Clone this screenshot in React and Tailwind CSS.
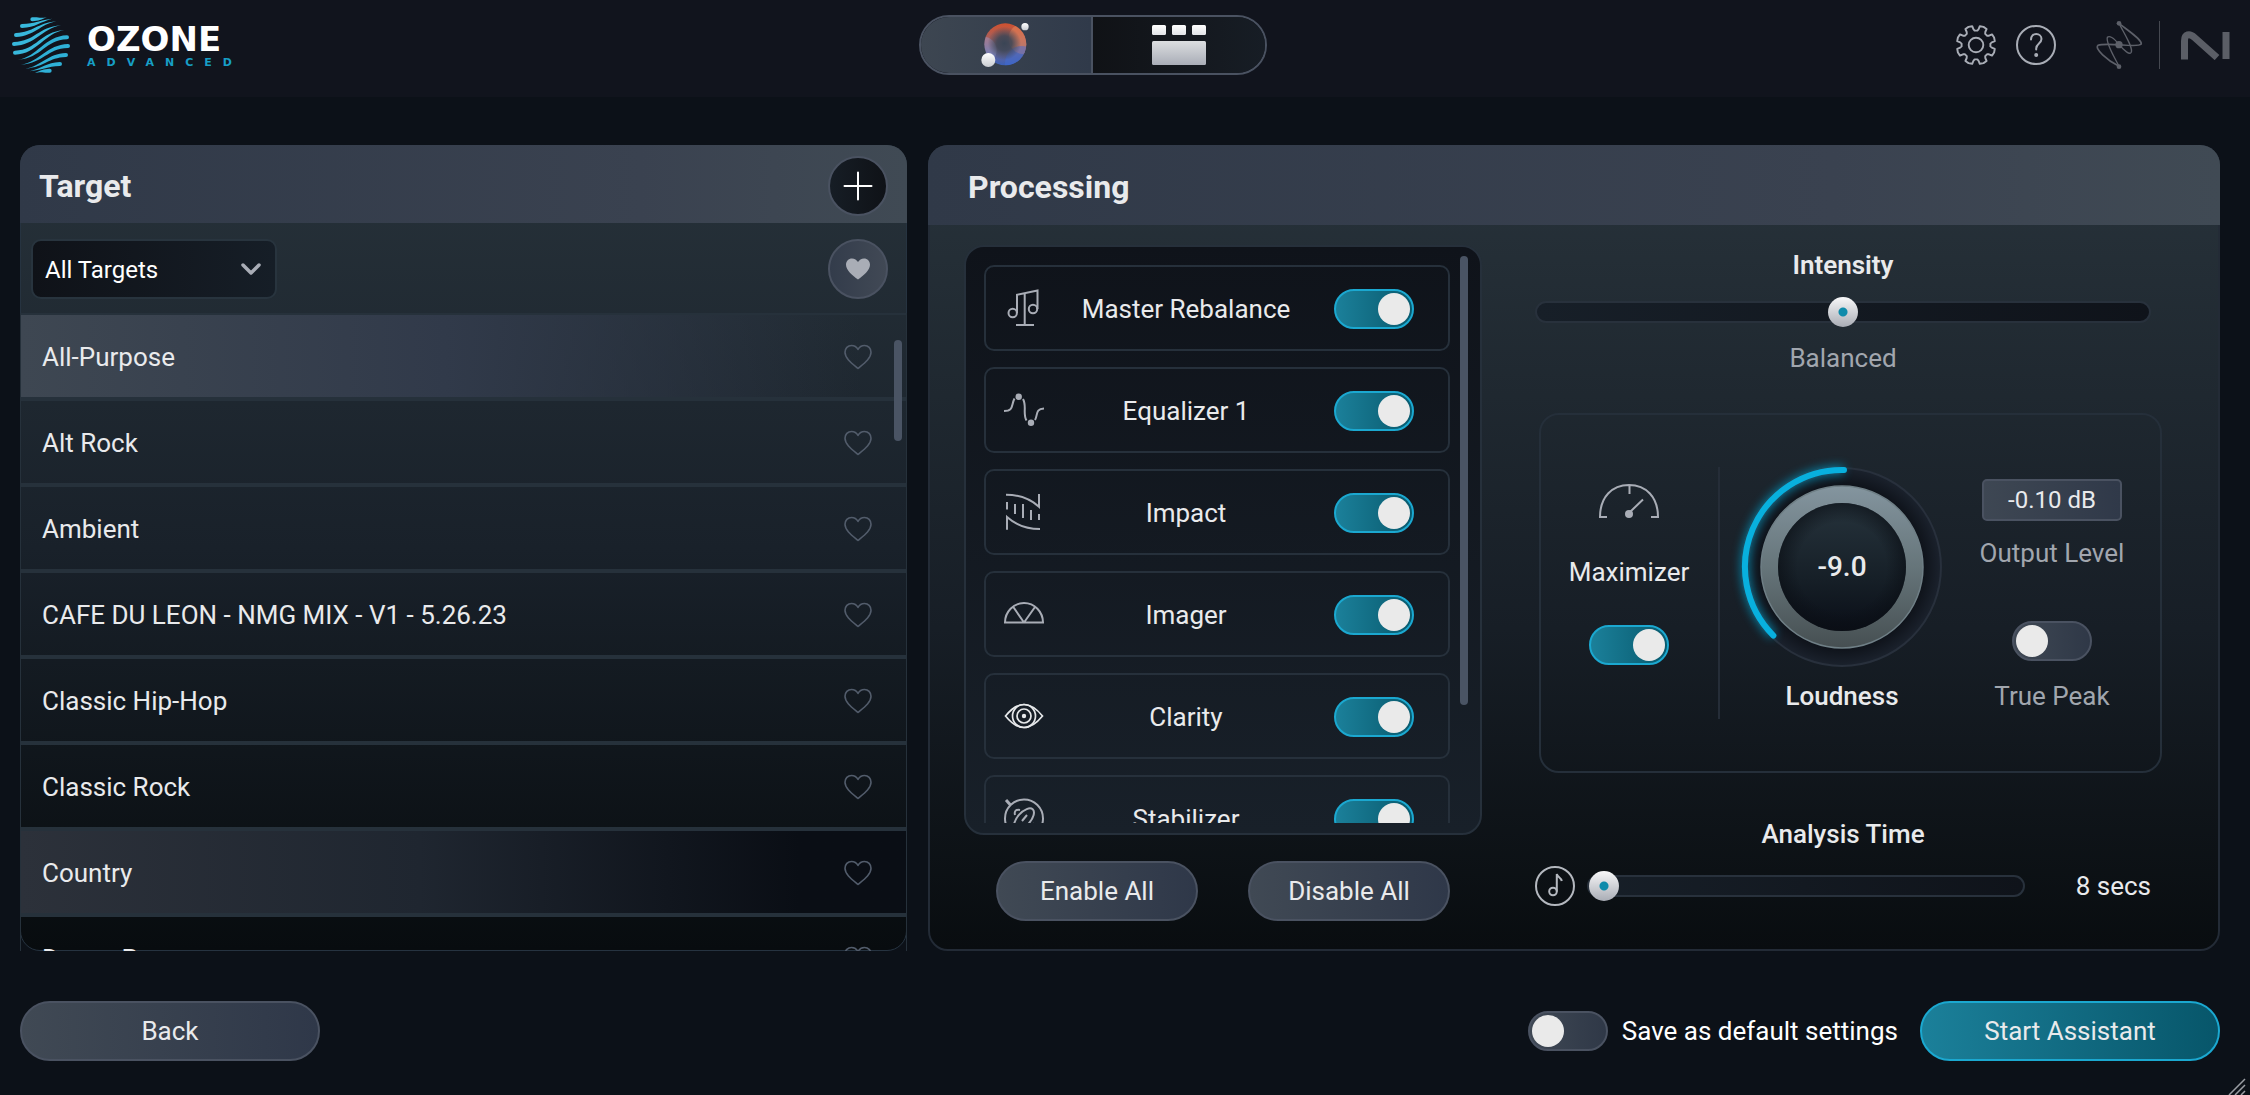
import { useState } from 'react';

const TARGETS = [
  'All-Purpose',
  'Alt Rock',
  'Ambient',
  'CAFE DU LEON - NMG MIX - V1 - 5.26.23',
  'Classic Hip-Hop',
  'Classic Rock',
  'Country',
  'Dance Pop',
];

const MODULES = [
  { name: 'Master Rebalance', Icon: RebalanceIcon },
  { name: 'Equalizer 1', Icon: EqualizerIcon },
  { name: 'Impact', Icon: ImpactIcon },
  { name: 'Imager', Icon: ImagerIcon },
  { name: 'Clarity', Icon: ClarityIcon },
  { name: 'Stabilizer', Icon: StabilizerIcon },
];

/* ---------- Icons ---------- */

// start point (thick, rounded) -> tip
const STRIPES = [
  [64, 13, 108, 6],
  [33, 33, 124, 11],
  [15, 60, 136, 19],
  [9, 87, 150, 31],
  [12, 113, 160, 45],
];

const stripePath = ([sx, sy, tx, ty]) => {
  const len = tx - sx;
  return `M${sx} ${sy - 6} C${sx + len * 0.45} ${sy - 8} ${tx - len * 0.5} ${ty + 6} ${tx} ${ty} C${tx - len * 0.4} ${ty + 9} ${sx + len * 0.45} ${sy + 4} ${sx} ${sy + 6} a6 6 0 0 1 0 -12z`;
};

function OzoneMark() {
  return (
    <svg viewBox="0 0 180 180" className="w-[60px] h-[60px]" fill="#38b8dc" aria-hidden="true">
      {STRIPES.map((s) => <path key={s[1]} d={stripePath(s)} />)}
      <g transform="rotate(180 90 90)" fill="#2fb0d6">
        {STRIPES.map((s) => <path key={s[1]} d={stripePath(s)} />)}
      </g>
    </svg>
  );
}

function OrbIcon() {
  return (
    <svg viewBox="0 0 150 140" className="w-[50px]" aria-hidden="true">
      <defs>
        <linearGradient id="orb" x1="0.5" y1="0" x2="0.5" y2="1">
          <stop offset="0" stopColor="#d3502b" />
          <stop offset="0.35" stopColor="#a8605c" />
          <stop offset="0.65" stopColor="#6a6591" />
          <stop offset="1" stopColor="#2f5fc4" />
        </linearGradient>
        <radialGradient id="orbCore">
          <stop offset="0" stopColor="#3a4555" />
          <stop offset="0.45" stopColor="#3a4555" stopOpacity="0.85" />
          <stop offset="1" stopColor="#3a4555" stopOpacity="0" />
        </radialGradient>
        <linearGradient id="ball" x1="0" y1="0" x2="0" y2="1">
          <stop offset="0" stopColor="#ffffff" />
          <stop offset="1" stopColor="#c9ccd1" />
        </linearGradient>
        <clipPath id="orbClip"><circle cx="73" cy="67" r="63" /></clipPath>
      </defs>
      <g clipPath="url(#orbClip)">
        <rect width="150" height="140" fill="url(#orb)" />
        <circle cx="5" cy="85" r="42" fill="#9aa4dc" opacity="0.4" />
        <circle cx="130" cy="50" r="47" fill="#f08a5a" opacity="0.5" />
        <circle cx="122" cy="122" r="50" fill="#3f6bd6" opacity="0.5" />
        <circle cx="70" cy="64" r="50" fill="url(#orbCore)" />
      </g>
      <circle cx="132" cy="14" r="11" fill="url(#ball)" />
      <circle cx="22" cy="114" r="21" fill="url(#ball)" />
    </svg>
  );
}

function ModulesIcon() {
  return (
    <svg viewBox="0 0 54 40" className="w-[54px] h-10" aria-hidden="true">
      <defs>
        <linearGradient id="tile" x1="0" y1="0" x2="0" y2="1">
          <stop offset="0" stopColor="#ffffff" />
          <stop offset="1" stopColor="#e2e4e7" />
        </linearGradient>
        <linearGradient id="slab" x1="0" y1="0" x2="0" y2="1">
          <stop offset="0" stopColor="#dcdee0" />
          <stop offset="1" stopColor="#a9adb7" />
        </linearGradient>
      </defs>
      <rect x="0" y="0" width="14" height="10" rx="1.5" fill="url(#tile)" />
      <rect x="20" y="0" width="14" height="10" rx="1.5" fill="url(#tile)" />
      <rect x="40" y="0" width="14" height="10" rx="1.5" fill="url(#tile)" />
      <rect x="0" y="16" width="54" height="24" rx="1.5" fill="url(#slab)" />
    </svg>
  );
}

const gearPoint = (r, deg) => {
  const a = (deg * Math.PI) / 180;
  return `${(21 + r * Math.sin(a)).toFixed(1)} ${(21 - r * Math.cos(a)).toFixed(1)}`;
};

const GEAR_PATH = `M${Array.from({ length: 8 }, (_, i) => {
  const mid = 22.5 + i * 45;
  return [
    gearPoint(14.5, mid - 17),
    gearPoint(16, mid - 13),
    gearPoint(19.2, mid - 11),
    gearPoint(19.6, mid),
    gearPoint(19.2, mid + 11),
    gearPoint(16, mid + 13),
    gearPoint(14.5, mid + 17),
  ].join(' L');
}).join(' L')}Z`;

function GearIcon() {
  return (
    <svg viewBox="0 0 42 42" className="w-[42px] h-[42px]" fill="none" stroke="#a9adb6" strokeWidth="1.9" strokeLinejoin="round" aria-hidden="true">
      <path d={GEAR_PATH} />
      <circle cx="21" cy="21" r="7.3" />
    </svg>
  );
}

function HelpIcon() {
  return (
    <svg viewBox="0 0 42 42" className="w-[42px] h-[42px]" fill="none" stroke="#a9adb6" strokeWidth="2" strokeLinecap="round" aria-hidden="true">
      <circle cx="21" cy="21" r="19" />
      <path d="M16 15.5c0-3.5 2.300-5.500 5.200-5.500s5.300 2 5.300 5c0 4.500-5.300 4.500-5.300 9.500v1" />
      <circle cx="21.200" cy="31" r="1.300" fill="#a9adb6" strokeWidth="1.400" />
    </svg>
  );
}

function OrbitIcon() {
  return (
    <svg viewBox="523 60 144 150" className="w-12 h-[50px]" fill="none" stroke="#5d6069" aria-hidden="true">
      <path strokeWidth="5" d="M595 70 C630 98 668 122 661 133 C652 144 560 126 532 136 C520 146 560 182 595 199" />
      <path strokeWidth="4" d="M595 133 C578 112 566 106 560 112 C555 130 582 172 595 199 M595 133 C612 154 626 164 631 158 C640 146 610 100 595 70" />
      <g fill="#5d6069" stroke="none">
        <circle cx="595" cy="70" r="7" />
        <circle cx="595" cy="134" r="11" />
        <circle cx="595" cy="200" r="7" />
      </g>
    </svg>
  );
}

function NiIcon() {
  return (
    <svg viewBox="0 0 49 29" className="w-[49px] h-[29px]" fill="none" stroke="#5b5e66" strokeWidth="7" aria-hidden="true">
      <path d="M3.500 28.500V10c0-7 5-8 10-3.500L36 26.500" />
      <path d="M45 1v27" />
    </svg>
  );
}

const HEART_PATH = 'M14 24.500C8 19.500 1 14.500 1 8.300 1 4.300 3.800 1.500 7.500 1.500c2.800 0 5.200 1.500 6.500 4 1.300-2.500 3.700-4 6.500-4 3.700 0 6.500 2.800 6.500 6.800 0 6.200-7 11.200-13 16.200z';

function HeartOutline() {
  return (
    <svg viewBox="0 0 28 26" className="w-7 h-[26px]" fill="none" stroke="#525c6b" strokeWidth="1.600" strokeLinejoin="round" aria-hidden="true">
      <path d={HEART_PATH} />
    </svg>
  );
}

function HeartFilled() {
  return (
    <svg viewBox="0 0 28 26" className="w-[26px] h-6" fill="#a9adb6" aria-hidden="true">
      <path d={HEART_PATH} />
    </svg>
  );
}

function ModuleSvg({ children, color = '#a9adb6' }) {
  return (
    <svg viewBox="0 0 44 44" className="w-11 h-11 shrink-0" fill="none" stroke={color} strokeWidth="2" aria-hidden="true">
      {children}
    </svg>
  );
}

function RebalanceIcon() {
  return (
    <ModuleSvg>
      <circle cx="10.700" cy="26" r="4.200" />
      <circle cx="31" cy="22" r="4.200" />
      <path d="M15 26V7.700L35.500 3.500V22M22.700 6V38M14 38h18" />
    </ModuleSvg>
  );
}

function EqualizerIcon() {
  return (
    <ModuleSvg>
      <path d="M2 22c10 0 7-6 10.500-12.500M21 10c4 7-.500 15 3.500 21.500M33 31c3-5 0-11 9-11.500" />
      <circle cx="16.700" cy="7.700" r="3.200" fill="#a9adb6" stroke="none" />
      <circle cx="29" cy="33.700" r="3.200" fill="#a9adb6" stroke="none" />
    </ModuleSvg>
  );
}

function ImpactIcon() {
  return (
    <ModuleSvg>
      <path d="M4 3.700c14 0 24 4 33 12V3M38 38C24 38 14 34 5 26v12.700" />
      <path d="M5 11v7.500M13 13v10M21 13v14M29 19v10M37 23v6" />
    </ModuleSvg>
  );
}

function ImagerIcon() {
  return (
    <ModuleSvg>
      <path d="M3 29.500a19 19.500 0 0 1 38 0zM22 29.500L11.300 14M22 29.500L33 14" />
    </ModuleSvg>
  );
}

function ClarityIcon() {
  return (
    <ModuleSvg color="#e6e8ea">
      <path strokeWidth="1.700" d="M3.500 21C10 13 16 9.500 22 9.500S34 13 40.500 21C34 29 28 32.500 22 32.500S10 29 3.500 21z" />
      <circle strokeWidth="1.700" cx="22" cy="21" r="11.500" />
      <circle strokeWidth="1.700" cx="22" cy="21" r="7" />
      <circle cx="22" cy="21" r="2.200" fill="#e6e8ea" stroke="none" />
    </ModuleSvg>
  );
}

function StabilizerIcon() {
  return (
    <ModuleSvg>
      <circle cx="22" cy="21.500" r="19" />
      <path strokeWidth="3" d="M4 3l4.500 5" />
      <ellipse cx="22" cy="22" rx="13" ry="6.500" transform="rotate(-48 22 22)" />
      <path d="M13 18c-1-4 1-6 5-5M31 26c1 4-1 6-5 5M20 24l5-6" />
    </ModuleSvg>
  );
}

function GaugeIcon() {
  return (
    <svg viewBox="0 0 60 36" className="w-[60px] h-9" fill="none" stroke="#a9adb6" strokeWidth="2" aria-hidden="true">
      <path d="M8 34H1C1 14 13 2 30 2s29 12 29 32h-7M30.500 2v9M31 29L44 16.500" />
      <circle cx="30" cy="31" r="4" fill="#a9adb6" stroke="none" />
    </svg>
  );
}

function NoteIcon() {
  return (
    <svg viewBox="0 0 40 40" className="w-10 h-10 shrink-0" fill="none" stroke="#b4b8bf" strokeWidth="2" aria-hidden="true">
      <circle cx="20" cy="20" r="19" />
      <circle cx="18" cy="25.500" r="3.800" />
      <path d="M21.800 25.500V8c.5 3 4.500 3.500 5 7" />
    </svg>
  );
}

/* ---------- Controls ---------- */

function Toggle({ label, defaultChecked = false, id }) {
  return (
    <input
      type="checkbox"
      role="switch"
      id={id}
      aria-label={label}
      defaultChecked={defaultChecked}
      className="appearance-none flex items-center shrink-0 w-20 h-10 p-[2px] rounded-full border-2 border-[#4a5261] bg-linear-to-r from-[#3f4854] to-[#2f3847] cursor-pointer checked:border-[#1ba8d0] checked:from-[#1b809a] checked:to-[#085a6e] before:block before:w-8 before:h-8 before:rounded-full before:bg-[#eaeaea] checked:before:translate-x-10"
    />
  );
}

function Slider({ label, ...props }) {
  return (
    <input
      type="range"
      aria-label={label}
      className="block w-full h-[30px] appearance-none bg-transparent cursor-pointer [&::-webkit-slider-runnable-track]:h-[22px] [&::-webkit-slider-runnable-track]:rounded-full [&::-webkit-slider-runnable-track]:border-2 [&::-webkit-slider-runnable-track]:border-[#28313c] [&::-webkit-slider-runnable-track]:bg-linear-to-r [&::-webkit-slider-runnable-track]:from-[#171f28] [&::-webkit-slider-runnable-track]:to-[#0f131a] [&::-webkit-slider-thumb]:appearance-none [&::-webkit-slider-thumb]:w-[30px] [&::-webkit-slider-thumb]:h-[30px] [&::-webkit-slider-thumb]:-mt-[6px] [&::-webkit-slider-thumb]:rounded-full [&::-webkit-slider-thumb]:bg-[radial-gradient(circle,#0f8bab_0_4px,transparent_5px),linear-gradient(#f8f8f9,#a9adb5)]"
      {...props}
    />
  );
}

function PillButton({ children, className = '' }) {
  return (
    <button
      type="button"
      className={`h-[60px] rounded-full border-2 border-[#4a5261] bg-linear-to-r from-[#404954] to-[#2f3849] text-[26px] leading-8 ${className}`}
    >
      {children}
    </button>
  );
}

function LoudnessDial({ value }) {
  return (
    <div className="grid place-items-center w-[200px] h-[200px]" role="slider" tabIndex={0} aria-label="Loudness" aria-valuenow={value} aria-valuemin={-24} aria-valuemax={0}>
      <svg viewBox="0 0 200 200" className="col-start-1 row-start-1 w-[200px] h-[200px] overflow-visible" fill="none" aria-hidden="true">
        <defs>
          <linearGradient id="rim" x1="0" y1="0" x2="0" y2="1">
            <stop offset="0" stopColor="#84959f" />
            <stop offset="0.5" stopColor="#66757a" />
            <stop offset="1" stopColor="#464f52" />
          </linearGradient>
          <linearGradient id="face" x1="0" y1="0" x2="0" y2="1">
            <stop offset="0" stopColor="#26333c" />
            <stop offset="0.6" stopColor="#161f27" />
            <stop offset="1" stopColor="#0a0e17" />
          </linearGradient>
          <radialGradient id="faceShade">
            <stop offset="0.7" stopColor="#0a0e14" stopOpacity="0" />
            <stop offset="1" stopColor="#0a0e14" stopOpacity="0.6" />
          </radialGradient>
          <radialGradient id="well">
            <stop offset="0.8" stopColor="#0d1118" />
            <stop offset="1" stopColor="#1b222d" />
          </radialGradient>
          <filter id="glow" x="-30%" y="-30%" width="160%" height="160%">
            <feGaussianBlur stdDeviation="5" />
          </filter>
        </defs>
        <circle cx="100" cy="100" r="99" fill="url(#well)" stroke="#28303c" strokeWidth="2" />
        <path d="M31.400 168.600A97 97 0 0 1 102 3" stroke="#0c8db3" strokeWidth="9" opacity="0.8" filter="url(#glow)" />
        <path d="M31.400 168.600A97 97 0 0 1 102 3" stroke="#08b0de" strokeWidth="6" strokeLinecap="round" />
        <circle cx="100" cy="100" r="81" fill="url(#rim)" stroke="#6f7f86" strokeWidth="1.500" />
        <circle cx="100" cy="100" r="64" fill="url(#face)" />
        <circle cx="100" cy="100" r="64" fill="url(#faceShade)" />
      </svg>
      <span className="col-start-1 row-start-1 text-[28px] leading-8 font-medium">{value.toFixed(1)}</span>
    </div>
  );
}

/* ---------- Page sections ---------- */

function Header() {
  return (
    <header className="flex items-center justify-between h-[97px] pl-[11px] pr-5 pb-[7px] bg-[#11141d]">
      <div className="flex items-center gap-4">
        <OzoneMark />
        <div className="font-['DejaVu_Sans'] font-bold pt-1">
          <div className="text-[34px] leading-8 text-white">OZONE</div>
          <div className="text-[11px] leading-4 tracking-[11px] text-[#179fc6] -mr-3">ADVANCED</div>
        </div>
      </div>

      <nav className="flex h-[60px] w-[348px] rounded-full border-2 border-[#4a5261] overflow-hidden" aria-label="View">
        <button type="button" aria-label="Assistant view" className="w-1/2 grid place-items-center border-r-2 border-[#4a5261] bg-linear-to-r from-[#3d4651] to-[#303a4a]">
          <OrbIcon />
        </button>
        <button type="button" aria-label="Detailed view" className="w-1/2 grid place-items-center bg-linear-to-r from-[#101216] to-[#171d25]">
          <ModulesIcon />
        </button>
      </nav>

      <div className="flex items-center">
        <button type="button" aria-label="Settings"><GearIcon /></button>
        <button type="button" aria-label="Help" className="ml-[18px]"><HelpIcon /></button>
        <a href="#izotope" aria-label="iZotope" className="ml-[38px]"><OrbitIcon /></a>
        <span className="w-px h-12 ml-4 bg-[#454850]" />
        <a href="#native-instruments" aria-label="Native Instruments" className="ml-[21px]"><NiIcon /></a>
      </div>
    </header>
  );
}

function TargetPanel() {
  const [selected, setSelected] = useState('All-Purpose');

  const rowBg = (name) => {
    if (name === selected) return 'bg-linear-to-r from-[#3e4752] via-[#313a4a] via-48% to-transparent to-95%';
    if (name === 'Country') return 'bg-linear-to-r from-[#2c313a] via-[#1f2630] via-45% to-[#0a0e15] to-88%';
    return '';
  };

  return (
    <section className="flex flex-col min-w-0 min-h-0 rounded-[20px] border border-[#263340] bg-linear-to-b from-[#27323a] via-[#19212a] via-50% to-[#080c0f]" aria-label="Target">
      <div className="flex items-center justify-between h-[78px] shrink-0 -mx-px -mt-px px-[19px] pt-1 rounded-t-[20px] bg-linear-to-r from-[#303948] via-[#3a4250] via-70% to-[#404a54]">
        <h2 className="text-[32px] leading-10 font-bold">Target</h2>
        <button type="button" aria-label="Add target" className="grid place-items-center w-[60px] h-[60px] rounded-full border-2 border-[#4a5261] bg-linear-to-r from-[#161d25] to-[#0f1217]">
          <svg viewBox="0 0 30 30" className="w-[30px] h-[30px]" stroke="#ffffff" strokeWidth="2" strokeLinecap="round" aria-hidden="true">
            <path d="M15 1.500v27M1.500 15h27" />
          </svg>
        </button>
      </div>

      <div className="flex items-center justify-between h-[90px] shrink-0 pl-[10px] pr-[18px] pt-[2px]">
        <div className="relative">
          <select aria-label="Target filter" className="appearance-none block w-[246px] h-[60px] pl-3 pt-[2px] rounded-[10px] border-2 border-[#28343e] bg-linear-to-r from-[#0f1218] to-[#161e27] text-2xl text-white">
            <option>All Targets</option>
            <option>Favorites</option>
          </select>
          <svg viewBox="0 0 20 12" className="absolute right-4 top-6 w-5 h-3 pointer-events-none" fill="none" stroke="#a9adb6" strokeWidth="3.500" strokeLinecap="round" strokeLinejoin="round" aria-hidden="true">
            <path d="M2 2l8 8 8-8" />
          </svg>
        </div>
        <button type="button" aria-label="Show favorites" className="grid place-items-center w-[60px] h-[60px] rounded-full border-2 border-[#4a5261] bg-linear-to-r from-[#333c4b] to-[#414955]">
          <HeartFilled />
        </button>
      </div>

      <div className="relative flex-1 min-h-0 -mx-px -mb-px">
        <ul className="h-full overflow-y-auto [scrollbar-width:none]">
          {TARGETS.map((name) => (
            <li key={name} className={`flex items-center h-[86px] pl-[21px] pr-[34px] pt-[2px] border-x border-y-2 border-[#26313b] ${rowBg(name)}`}>
              <button type="button" onClick={() => setSelected(name)} className="flex-1 text-left text-[26px] leading-8">
                {name}
              </button>
              <button type="button" aria-label={`Favorite ${name}`}><HeartOutline /></button>
            </li>
          ))}
        </ul>
        <span className="absolute right-[5px] top-[27px] w-2 h-[101px] rounded-full bg-[#4a5464]" />
      </div>
    </section>
  );
}

function ModuleList() {
  return (
    <div className="flex flex-col w-[518px] shrink-0 min-h-0">
      <div className="relative flex-1 min-h-0 pl-[18px] pr-[30px] pt-[18px] pb-[10px] rounded-[20px] border-2 border-[#26303b] bg-linear-to-b from-[#0f131a] to-[#182029]">
        <ul className="flex flex-col gap-4 h-full overflow-y-auto [scrollbar-width:none]">
          {MODULES.map(({ name, Icon }) => (
            <li key={name} className="flex items-center h-[86px] shrink-0 pl-4 pr-[34px] pt-px rounded-[10px] border-2 border-[#26303b]">
              <Icon />
              <span className="flex-1 text-center text-[26px] leading-8 pr-2">{name}</span>
              <Toggle label={name} defaultChecked />
            </li>
          ))}
        </ul>
        <span className="absolute right-3 top-[9px] w-2 h-[449px] rounded-full bg-[#4a5464]" />
      </div>
      <div className="flex justify-between mt-[26px] px-8">
        <PillButton className="w-[202px]">Enable All</PillButton>
        <PillButton className="w-[202px]">Disable All</PillButton>
      </div>
    </div>
  );
}

function MaximizerCard() {
  return (
    <div className="flex justify-between h-[360px] pr-5 py-[52px] rounded-[20px] border-2 border-[#252f3a]">
      <div className="flex flex-col items-center w-[176px] pt-4">
        <GaugeIcon />
        <label htmlFor="maximizer" className="mt-[37px] text-[26px] leading-8">Maximizer</label>
        <div className="mt-[37px]"><Toggle id="maximizer" label="Maximizer" defaultChecked /></div>
      </div>
      <span className="w-[2px] h-full bg-[#252d38]" />
      <div className="flex flex-col items-center w-[242px]">
        <LoudnessDial value={-9} />
        <span className="mt-[13px] text-[26px] leading-8 font-medium">Loudness</span>
      </div>
      <div className="flex flex-col items-center w-[176px] pt-3">
        <input
          id="output-level"
          type="text"
          defaultValue="-0.10 dB"
          className="w-[140px] h-[42px] rounded-[5px] border-2 border-[#4a5261] bg-linear-to-r from-[#3e4753] to-[#303949] text-center text-2xl"
        />
        <label htmlFor="output-level" className="mt-4 text-[26px] leading-8 text-[#a1a6ae]">Output Level</label>
        <div className="mt-[52px]"><Toggle id="true-peak" label="True Peak" /></div>
        <label htmlFor="true-peak" className="mt-[19px] text-[26px] leading-8 text-[#a1a6ae]">True Peak</label>
      </div>
    </div>
  );
}

function ProcessingPanel() {
  return (
    <section className="flex flex-col min-w-0 min-h-0 rounded-[20px] border-2 border-[#232b36] bg-linear-to-b from-[#28333b] via-[#171e26] via-60% to-[#090d10]" aria-label="Processing">
      <div className="flex items-center h-20 shrink-0 -mx-[2px] -mt-[2px] pl-10 pt-1 rounded-t-[20px] bg-linear-to-r from-[#303948] via-[#3a4250] via-70% to-[#404a54]">
        <h2 className="text-[32px] leading-10 font-bold">Processing</h2>
      </div>
      <div className="flex flex-1 min-h-0 gap-[53px] pl-[34px] pr-14 pt-5 pb-7">
        <ModuleList />
        <div className="flex flex-col flex-1 min-w-0 pt-1">
          <div className="pr-[11px] text-center">
            <h3 className="text-[26px] leading-8 font-semibold">Intensity</h3>
            <div className="mt-4"><Slider label="Intensity" min="0" max="100" defaultValue="50" /></div>
            <p className="mt-[15px] text-[26px] leading-8 text-[#a1a6ae]">Balanced</p>
          </div>
          <div className="mt-[39px] pl-1"><MaximizerCard /></div>
          <div className="mt-[45px] pr-[11px]">
            <h3 className="text-center text-[26px] leading-8 font-medium">Analysis Time</h3>
            <div className="flex items-center mt-4">
              <NoteIcon />
              <div className="flex-1 ml-3"><Slider label="Analysis time" min="8" max="60" defaultValue="8" /></div>
              <output className="w-[126px] text-right text-[26px] leading-8">8 secs</output>
            </div>
          </div>
        </div>
      </div>
    </section>
  );
}

function Footer() {
  return (
    <footer className="relative flex items-center justify-between h-36 pl-5 pr-[30px] pt-4">
      <PillButton className="w-[300px]">Back</PillButton>
      <div className="flex items-center">
        <Toggle id="save-default" label="Save as default settings" />
        <label htmlFor="save-default" className="ml-[14px] mr-[22px] text-[26px] leading-8 text-white">Save as default settings</label>
        <button type="button" className="w-[300px] h-[60px] rounded-full border-2 border-[#1ba8d0] bg-linear-to-r from-[#1b809a] to-[#07566a] text-[26px] leading-8">
          Start Assistant
        </button>
      </div>
      <svg viewBox="0 0 18 18" className="absolute right-1 bottom-0 w-[18px] h-[18px]" stroke="#9a9da3" strokeWidth="1.500" aria-hidden="true">
        <path d="M1 18L17 2M7 18L17 8M13 18l4-4" />
      </svg>
    </footer>
  );
}

export default function App() {
  return (
    <div className="flex flex-col h-screen min-h-[1000px] bg-[#0c1118] text-[#e9eaec] font-['Roboto',sans-serif]">
      <Header />
      <main className="grid grid-cols-[887fr_1292fr] grid-rows-[minmax(0,1fr)] gap-[21px] flex-1 min-h-0 pt-12 pl-5 pr-[30px]">
        <TargetPanel />
        <ProcessingPanel />
      </main>
      <Footer />
    </div>
  );
}
